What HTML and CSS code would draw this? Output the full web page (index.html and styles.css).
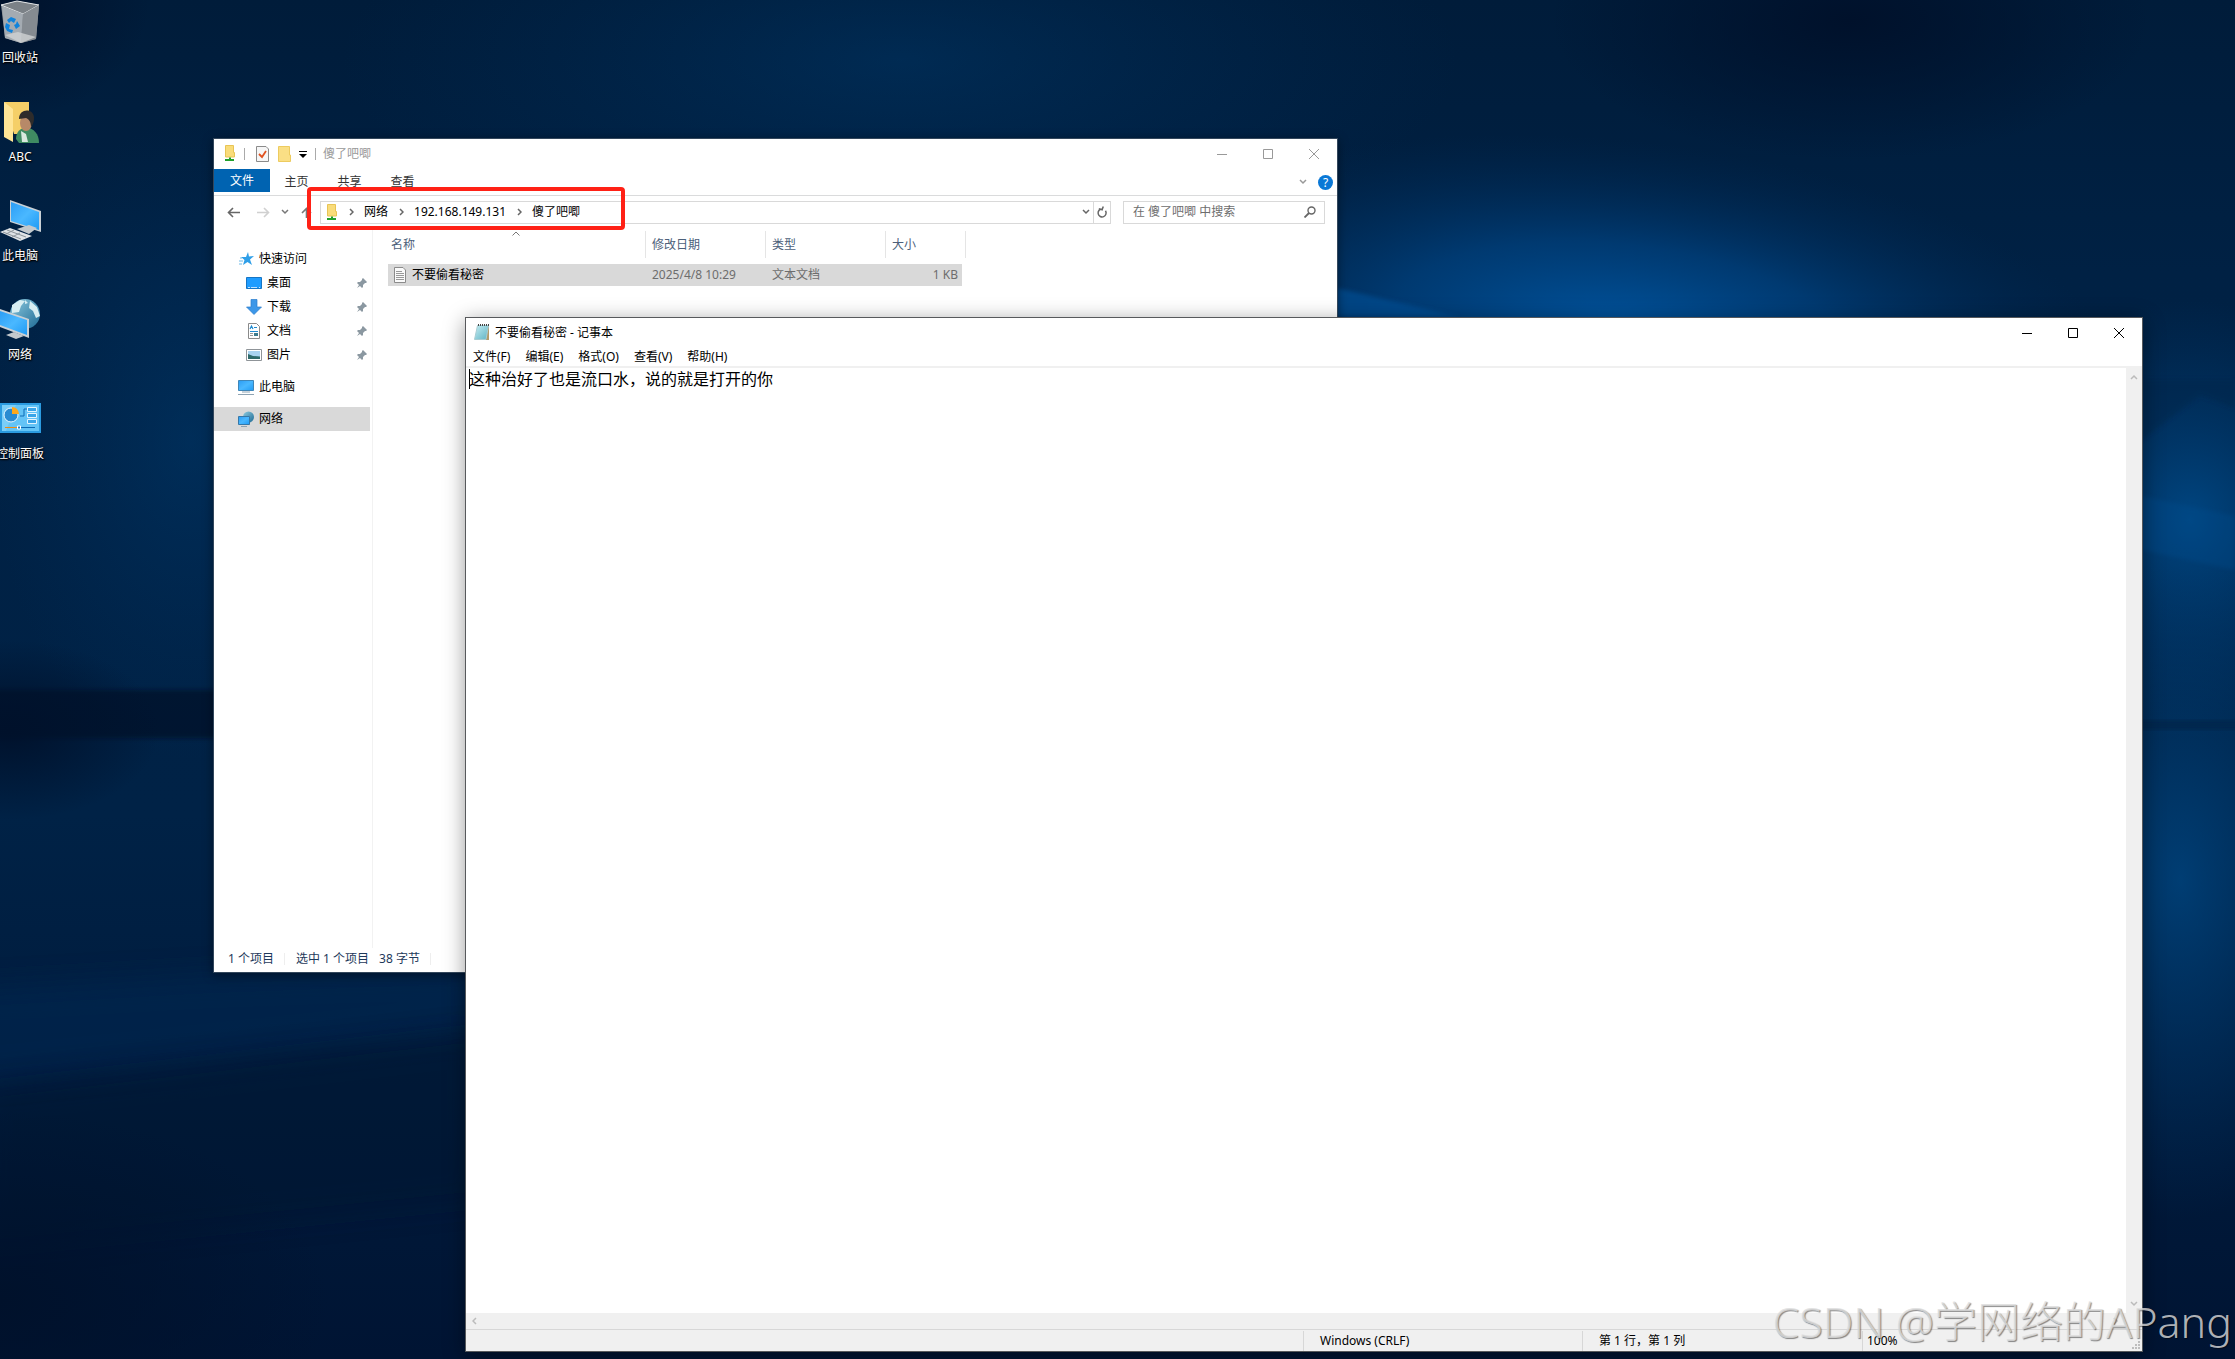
FILE: index.html
```html
<!DOCTYPE html>
<html lang="zh-CN">
<head>
<meta charset="utf-8">
<title>不要偷看秘密 - 记事本</title>
<link rel="stylesheet" href="styles.css">
</head>
<body class="desktop">
<svg class="wallpaper" viewBox="0 0 2235 1359" preserveAspectRatio="none" aria-hidden="true">
  <defs>
    <linearGradient id="base" x1="0" y1="0" x2="0" y2="1"><stop offset="0" stop-color="#001c3a"/><stop offset=".2" stop-color="#002144"/><stop offset=".6" stop-color="#002246"/><stop offset="1" stop-color="#001433"/></linearGradient>
    <radialGradient id="glow"><stop offset="0" stop-color="#0055a0"/><stop offset=".45" stop-color="#004280" stop-opacity=".75"/><stop offset="1" stop-color="#002a55" stop-opacity="0"/></radialGradient>
    <radialGradient id="haze"><stop offset="0" stop-color="#004a88"/><stop offset="1" stop-color="#003a70" stop-opacity="0"/></radialGradient>
    <radialGradient id="dark"><stop offset="0" stop-color="#00112b"/><stop offset="1" stop-color="#00112b" stop-opacity="0"/></radialGradient>
    <filter id="soft" x="-30%" y="-30%" width="160%" height="160%"><feGaussianBlur stdDeviation="14"/></filter>
    <filter id="edge"><feGaussianBlur stdDeviation="2"/></filter>
  </defs>
  <rect width="2235" height="1359" fill="url(#base)"/>
  <ellipse cx="900" cy="60" rx="560" ry="200" fill="url(#haze)" opacity=".3"/>
  <ellipse cx="1620" cy="330" rx="500" ry="190" fill="url(#glow)" transform="rotate(6 1620 330)"/>
  <ellipse cx="1850" cy="20" rx="300" ry="140" fill="url(#dark)"/>
  <ellipse cx="0" cy="0" rx="150" ry="120" fill="url(#dark)"/>
  <ellipse cx="190" cy="440" rx="200" ry="320" fill="url(#haze)" opacity=".3"/>
  <ellipse cx="2190" cy="520" rx="190" ry="220" fill="url(#haze)" opacity=".9"/>
  <ellipse cx="2180" cy="880" rx="180" ry="340" fill="url(#haze)" opacity=".7"/>
  <polygon points="1337,288 1460,317 1337,317" fill="#005199" filter="url(#edge)" opacity=".6"/>
  <polygon points="2142,496 2235,516 2235,570 2142,550" fill="#004d8f" filter="url(#edge)" opacity=".3"/>
  <polygon points="2142,440 2200,395 2235,408 2235,380 2142,380" fill="#00254b" filter="url(#edge)" opacity=".5"/>
  <rect x="2130" y="720" width="120" height="10" fill="#00254d" filter="url(#edge)"/>
  <rect x="-20" y="690" width="240" height="48" fill="#000e24" filter="url(#edge)" opacity=".6"/>
  <ellipse cx="10" cy="730" rx="150" ry="90" fill="url(#dark)"/>
  <polygon points="-60,1085 470,1030 470,965 200,975 -60,990" fill="#002b56" filter="url(#soft)" opacity=".45"/>
  <polygon points="-20,1090 480,1032 480,1200 -20,1250" fill="#00152f" filter="url(#soft)" opacity=".4"/>
  <ellipse cx="0" cy="1300" rx="330" ry="190" fill="url(#dark)"/>
</svg>

<svg class="sprite" aria-hidden="true">
  <defs>
    <linearGradient id="screen" x1="0" y1="0" x2="1" y2="1"><stop offset="0" stop-color="#2b9df5"/><stop offset=".5" stop-color="#4ab8ff"/><stop offset="1" stop-color="#1f9bf5"/></linearGradient>
    <linearGradient id="globe" x1="0" y1="0" x2="1" y2="1"><stop offset="0" stop-color="#8ecbe0"/><stop offset="1" stop-color="#1d6a94"/></linearGradient>
    <linearGradient id="paper" x1="0" y1="0" x2="1" y2="1"><stop offset="0" stop-color="#c5edf2"/><stop offset="1" stop-color="#5fb3c4"/></linearGradient>
    <symbol id="i-share" viewBox="0 0 12 17"><path d="M1.500.5h8v7h1v4.500h-9z" fill="#f9dc7a" stroke="#e8c455"/><path d="M5 12.500h2V14h3v2H1v-2h4z" fill="#22a02c"/></symbol>
    <symbol id="i-pin" viewBox="0 0 10 10"><path d="M6 0l4 4-1 1-1 0-2 2 0 2-1 1-2-2-3 2 2-3-2-2 1-1h2l2-2V1z" fill="#8b98a1"/></symbol>
    <symbol id="i-right" viewBox="0 0 5 8"><path d="M1 1l3 3-3 3" fill="none" stroke="currentColor" stroke-width="1.5"/></symbol>
    <symbol id="i-down" viewBox="0 0 8 6"><path d="M1 1l3 3 3-3" fill="none" stroke="currentColor" stroke-width="1.5"/></symbol>
    <symbol id="i-min" viewBox="0 0 10 10"><path d="M0 5.500h10" stroke="currentColor"/></symbol>
    <symbol id="i-max" viewBox="0 0 10 10"><path d="M.5.5h9v9h-9z" fill="none" stroke="currentColor"/></symbol>
    <symbol id="i-close" viewBox="0 0 10 10"><path d="M0 0l10 10M10 0L0 10" stroke="currentColor"/></symbol>
  </defs>
</svg>

<nav class="shortcuts" aria-label="桌面">
  <a class="shortcut" href="#recycle">
    <svg viewBox="0 0 40 44"><path d="M1 5l16-4 22 4-3 34-15 4-16-5z" fill="#8a9096"/><path d="M1 5l16-4 22 4-16 9z" fill="#7b8187" stroke="#e2e5e7"/><path d="M2 6l21 8-2 29-16-5z" fill="#a4abb2"/><path d="M23 14l16-9-3 34-15 4z" fill="#858b91"/><path d="M5 35l13-3 18 5-15 6z" fill="#d0d2d3" opacity=".8"/><path d="M7 20l4-3 5 2-2 4-3-2-2 2zM17 21l3 5-4 3-2-4 2-1zM6 23l4 2-1 4 4 1-1 3-5-2-2-4z" fill="#1083dc"/></svg>
    <span>回收站</span></a>
  <a class="shortcut" href="#user">
    <svg viewBox="0 0 40 44"><path d="M4 3h25v32H14z" fill="#f5cf68"/><path d="M4 3l9 7v33l-9-5z" fill="#ffe596"/><path d="M16 40c0-8 5-11 10-11 8 0 13 6 13 15H19z" fill="#3f8b62"/><path d="M21 32l5 3 2 8h-6z" fill="#d9e9df"/><ellipse cx="26" cy="24" rx="6" ry="8" fill="#b78968"/><path d="M19 20c0-11 15-11 15-1 0 5-2 8-3 9 0-5-2-8-5-9z" fill="#2e2c2b"/></svg>
    <span>ABC</span></a>
  <a class="shortcut" href="#pc">
    <svg viewBox="0 0 40 44"><path d="M10 2l31 11v21L10 24z" fill="#c9d0d5"/><path d="M11 4l28 10v18L11 23z" fill="url(#screen)"/><path d="M17 31l12-4 8 3-8 6z" fill="#c3c9cd"/><path d="M0 34l10-4 22 8-12 5z" fill="#dfe3e6"/><path d="M3 34l18 7M7 32l19 7M6 36l8-4M12 39l8-4" stroke="#8e969c"/></svg>
    <span>此电脑</span></a>
  <a class="shortcut" href="#net">
    <svg viewBox="0 0 40 44"><circle cx="25" cy="17" r="15" fill="url(#globe)"/><path d="M12 8l8-5 5 1-4 5-2 6-7 1zM30 4l7 6 3 9-4 2-3-7-4-3zM25 3l3 3-3 1z" fill="#d8eef2"/><path d="M0 12l29 10v19L0 30z" fill="#c9d0d5"/><path d="M0 14l27 9v15L0 28z" fill="url(#screen)"/><path d="M6 38l8-3 10 4-8 3z" fill="#c3c9cd"/></svg>
    <span>网络</span></a>
  <a class="shortcut" href="#control">
    <svg viewBox="0 0 40 44"><path d="M0 7h41v30H0z" fill="#2b9be0"/><path d="M2 9h37v26H2z" fill="#64c4f6"/><path d="M2 9h14L6 35H2z" fill="#8fd7fa" opacity=".5"/><circle cx="11" cy="19" r="7" fill="#2a8bd2" stroke="#eaf7ff"/><path d="M12 18v-7a7 7 0 0 1 7 7z" fill="#ffa81c"/><path d="M20 20h4v-7h3" fill="none" stroke="#0c6bb5"/><path d="M27.500 11.500h9v4h-9zM27.500 17.500h9v4h-9zM27.500 23.500h9v4h-9z" fill="#3aa5e8" stroke="#e4f5ff"/><path d="M5 31.500h12" stroke="#f08a10"/><path d="M20 31.500h15" stroke="#0c6bb5"/><path d="M17.500 30h3v3h-3z" fill="#1a80cc" stroke="#fff"/></svg>
    <span>控制面板</span></a>
</nav>

<section class="window explorer" aria-label="傻了吧唧">
  <header class="titlebar">
    <svg class="i-12"><use href="#i-share"/></svg>
    <span class="rule"></span>
    <svg class="props" viewBox="0 0 13 16"><path d="M.5.5H10L12.500 3v12.500H.5z" fill="#f6f6f6" stroke="#8b8b8b"/><path d="M3 8l3 3 4-6" fill="none" stroke="#e0511f" stroke-width="1.800"/></svg>
    <svg class="folder" viewBox="0 0 14 16"><path d="M.5.5h11V9h1v6.500H.5z" fill="#fadf85" stroke="#edcb5f"/></svg>
    <svg class="more" viewBox="0 0 8 8"><path d="M0 1.500h8" stroke="#000"/><path d="M0 4h8L4 8z"/></svg>
    <span class="rule"></span>
    <h1 class="title">傻了吧唧</h1>
    <div class="controls">
      <button aria-label="最小化"><svg><use href="#i-min"/></svg></button>
      <button aria-label="最大化"><svg><use href="#i-max"/></svg></button>
      <button aria-label="关闭"><svg><use href="#i-close"/></svg></button>
    </div>
  </header>
  <div class="ribbon">
    <button class="tab file">文件</button>
    <button class="tab">主页</button>
    <button class="tab">共享</button>
    <button class="tab">查看</button>
    <span class="grow"></span>
    <button class="fold" aria-label="展开功能区"><svg class="i-down"><use href="#i-down"/></svg></button>
    <button class="help" aria-label="帮助">?</button>
  </div>
  <div class="addressbar">
    <div class="history">
      <button aria-label="后退"><svg viewBox="0 0 13 11"><path d="M13 5.500H1.500M6 1L1.500 5.500 6 10" fill="none" stroke="#666" stroke-width="1.600"/></svg></button>
      <button aria-label="前进"><svg viewBox="0 0 13 11"><path d="M0 5.500h11.500M7 1l4.500 4.500L7 10" fill="none" stroke="#d0d0d0" stroke-width="1.600"/></svg></button>
      <button class="recent" aria-label="最近"><svg class="i-down"><use href="#i-down"/></svg></button>
      <button aria-label="向上"><svg viewBox="0 0 13 11"><path d="M6.500 11V1.500M2 6l4.500-4.500L11 6" fill="none" stroke="#777" stroke-width="1.600"/></svg></button>
    </div>
    <div class="path">
      <svg class="i-12"><use href="#i-share"/></svg>
      <svg class="i-right"><use href="#i-right"/></svg><a href="#net">网络</a>
      <svg class="i-right"><use href="#i-right"/></svg><a href="#host">192.168.149.131</a>
      <svg class="i-right"><use href="#i-right"/></svg><a href="#share">傻了吧唧</a>
      <span class="grow"></span>
      <button class="drop" aria-label="以前的位置"><svg class="i-down"><use href="#i-down"/></svg></button>
      <button class="refresh" aria-label="刷新"><svg viewBox="0 0 10 12"><path d="M6.500 3.200A4 4 0 1 1 2.500 3.700M6 .5v3.500h3.500" fill="none" stroke="#666" stroke-width="1.500" transform="matrix(-1 0 0 1 10 0) rotate(-20 5 7)"/></svg></button>
    </div>
    <form class="search">
      <input type="text" aria-label="搜索" placeholder="在 傻了吧唧 中搜索">
      <button type="button" aria-label="搜索"><svg viewBox="0 0 12 12"><circle cx="7.500" cy="4.500" r="3.500" fill="none" stroke="#666" stroke-width="1.400"/><path d="M5 7L.5 11.500" stroke="#666" stroke-width="1.800"/></svg></button>
    </form>
  </div>
  <div class="body">
    <nav class="tree">
      <a href="#quick"><svg viewBox="0 0 16 16"><path d="M10 1l1 4.500 5-.5-4 3.500L14 14l-4.500-3L5 14l1.500-5L3 6h5z" fill="#2f9fe8"/><path d="M1 10h4M1 13h3M2 7h2" stroke="#6db9e8"/></svg>快速访问</a>
      <a class="sub" href="#desk"><svg viewBox="0 0 16 16"><path d="M.5 2.500h15v11H.5z" fill="#1e9cff" stroke="#1675c4"/><path d="M2 12.500h2M5 12.500h6M13 12.500h1" stroke="#bfe2ff"/></svg>桌面<svg class="pin"><use href="#i-pin"/></svg></a>
      <a class="sub" href="#down"><svg viewBox="0 0 16 16"><path d="M5 .5h6V8h4.500L8 15.500.5 8H5z" fill="#3c97e8" stroke="#2a7dcb" stroke-width=".7"/></svg>下载<svg class="pin"><use href="#i-pin"/></svg></a>
      <a class="sub" href="#docs"><svg viewBox="0 0 16 16"><path d="M2.500.5h8l3 3v12h-11z" fill="#fff" stroke="#8a8a8a"/><path d="M4 6l1.500-3L7 6M8 4.500h3M4 8.500h8" fill="none" stroke="#1f8ad0" stroke-width="1.200"/><path d="M4 10.500h3M4 12.500h3" stroke="#999"/><path d="M8 10h4v3H8z" fill="#3d7c8e"/></svg>文档<svg class="pin"><use href="#i-pin"/></svg></a>
      <a class="sub" href="#pics"><svg viewBox="0 0 16 16"><path d="M.5 2.500h15v11H.5z" fill="#fff" stroke="#8f9498"/><path d="M2 4h12v8H2z" fill="#a9d3f0"/><path d="M2 7l5 2 7 .5V12H2z" fill="#2e6a6a"/></svg>图片<svg class="pin"><use href="#i-pin"/></svg></a>
      <a class="gap" href="#pc"><svg viewBox="0 0 16 16"><path d="M.5 1.500h15v10H.5z" fill="url(#screen)" stroke="#3f86b8"/><path d="M4 13h8M0 15.500h16" stroke="#8ea3b3"/></svg>此电脑</a>
      <a class="gap current" href="#net"><svg viewBox="0 0 16 16"><circle cx="10.500" cy="6" r="5.500" fill="url(#globe)"/><path d="M.5 5.500h11v8H.5z" fill="url(#screen)" stroke="#3678a8"/><path d="M3 15.500h6" stroke="#8ea3b3"/></svg>网络</a>
    </nav>
    <main class="files">
      <table>
        <thead><tr><th class="name">名称<svg class="sort" viewBox="0 0 8 5"><path d="M.5 4.500L4 1l3.500 3.500" fill="none" stroke="#777"/></svg></th><th class="date">修改日期</th><th class="kind">类型</th><th class="size">大小</th></tr></thead>
        <tbody><tr><td class="name"><svg viewBox="0 0 12 16"><path d="M.5.5H9L11.500 3v12.500H.5z" fill="#fafafa" stroke="#8b8b8b"/><path d="M2 4.500h6M2 6.500h8M2 8.500h8M2 10.500h8M2 12.500h8" stroke="#999"/></svg>不要偷看秘密</td><td>2025/4/8 10:29</td><td>文本文档</td><td class="size">1 KB</td></tr></tbody>
      </table>
    </main>
  </div>
  <footer class="status"><span>1 个项目</span><span class="rule"></span><span>选中 1 个项目</span><span class="bytes">38 字节</span><span class="rule"></span></footer>
  <div class="highlight"></div>
</section>

<section class="window notepad" aria-label="不要偷看秘密 - 记事本">
  <header class="titlebar">
    <svg class="i-16" viewBox="0 0 16 17"><path d="M4 2h11v14H3z" fill="#b39b6b"/><path d="M3.500 1.500h11L12 15.500H.5z" fill="url(#paper)" stroke="#a8ccd2"/><path d="M4 1h11" stroke="#444" stroke-width="2" stroke-dasharray="1 1"/></svg>
    <h1 class="title">不要偷看秘密 - 记事本</h1>
    <div class="controls">
      <button aria-label="最小化"><svg><use href="#i-min"/></svg></button>
      <button aria-label="最大化"><svg><use href="#i-max"/></svg></button>
      <button aria-label="关闭"><svg><use href="#i-close"/></svg></button>
    </div>
  </header>
  <div class="menubar"><button>文件(F)</button><button>编辑(E)</button><button>格式(O)</button><button>查看(V)</button><button>帮助(H)</button></div>
  <div class="editor">
    <textarea aria-label="文本编辑器" spellcheck="false">这种治好了也是流口水，说的就是打开的你</textarea>
    <span class="caret"></span>
    <div class="vscroll"><svg class="i-down up"><use href="#i-down"/></svg><svg class="i-down"><use href="#i-down"/></svg></div>
    <div class="hscroll"><svg class="i-right left"><use href="#i-right"/></svg><svg class="i-right"><use href="#i-right"/></svg></div>
  </div>
  <footer class="info"><span class="encoding">Windows (CRLF)</span><span class="position">第 1 行，第 1 列</span><span class="zoom">100%</span>
    <svg class="grip" viewBox="0 0 8 8"><path d="M6 0h2v2H6zM6 3h2v2H6zM6 6h2v2H6zM3 3h2v2H3zM3 6h2v2H3zM0 6h2v2H0z" fill="#bdbdbd"/></svg>
  </footer>
</section>
<div class="watermark">CSDN @学网络的APang</div>
</body>
</html>
```
FILE: styles.css
```css
* { box-sizing: border-box; }
html, body { height: 100%; }
body, button, input { font: 12px/16px "Noto Sans", "Noto Sans CJK SC", sans-serif; }
.desktop { position: relative; margin: 0; overflow: hidden; background: #001d3d; color: #000; }
a { color: inherit; text-decoration: none; }
button { padding: 0; border: 0; background: none; color: inherit; }
svg { display: block; flex: none; }
h1 { margin: 0; font: inherit; }
.sprite { position: absolute; width: 0; height: 0; }
.wallpaper { position: absolute; inset: 0; width: 100%; height: 100%; }
.grow { flex: 1; }
.i-12 { width: 12px; height: 17px; }
.i-16 { width: 16px; height: 17px; }
.i-right { width: 5px; height: 8px; }
.i-down { width: 8px; height: 6px; }

.shortcuts { position: relative; display: flex; flex-direction: column; width: 40px; }
.shortcut { display: flex; flex-direction: column; align-items: center; gap: 6px; height: 99px; color: #fff; white-space: nowrap; text-shadow: 1px 1px 2px #000, 0 1px 1px #000; }
.shortcut svg { width: 40px; height: 44px; overflow: visible; }

.window { position: absolute; display: flex; flex-direction: column; background: #fff; }
.titlebar { display: flex; align-items: center; flex: none; }
.controls { display: flex; margin-left: auto; }
.controls button { display: grid; place-items: center; width: 46px; height: 28px; }
.controls svg { width: 10px; height: 10px; }

.explorer { left: 213px; top: 138px; right: 897px; bottom: 386px; border: 1px solid #33475c; box-shadow: 0 2px 10px rgba(0, 0, 0, .4); }
.explorer .titlebar { height: 30px; padding: 0 0 1px 10px; color: #999; }
.rule { width: 1px; height: 12px; background: #aaa; }
.titlebar .rule { margin: 0 11px 0 8px; }
.props { width: 13px; height: 16px; margin-right: 9px; }
.folder { width: 14px; height: 16px; margin-right: 7px; }
.more { width: 8px; height: 8px; }
.explorer .titlebar .rule + .title { margin-left: -4px; }
.ribbon { display: flex; align-items: center; height: 27px; flex: none; border-bottom: 1px solid #dadbdc; color: #333; }
.tab { width: 53px; height: 26px; }
.file { width: 56px; height: 23px; align-self: flex-start; background: #0063b1; color: #fff; }
.fold { color: #999; }
.help { width: 15px; height: 15px; margin: 0 4px 0 11px; border-radius: 50%; background: #0a78d6; color: #fff; line-height: 15px; }
.addressbar { display: flex; align-items: center; height: 32px; flex: none; padding: 0 12px 0 13px; }
.history { display: flex; align-items: center; gap: 11px; width: 93px; overflow: hidden; color: #777; }
.history button svg:not(.i-down) { width: 13px; height: 11px; }
.history button:nth-child(2) { margin-left: 6px; }
.path { display: flex; align-items: center; flex: 1; height: 23px; padding-left: 5px; border: 1px solid #d9d9d9; }
.path .i-right { margin: 0 10px 0 11px; color: #666; }
.drop { margin-right: 3px; color: #666; }
.refresh { display: grid; place-items: center; width: 17px; height: 21px; border-left: 1px solid #d9d9d9; }
.refresh svg { width: 10px; height: 12px; overflow: visible; }
.search { display: flex; align-items: center; width: 202px; height: 23px; margin-left: 12px; padding: 0 8px 0 9px; border: 1px solid #d9d9d9; }
.search input { flex: 1; min-width: 0; padding: 0; border: 0; outline: 0; }
.search input::placeholder { color: #6d6d6d; opacity: 1; }
.search svg { width: 12px; height: 12px; }
.body { display: flex; flex: 1; min-height: 0; }
.tree { display: flex; flex-direction: column; flex: none; width: 159px; padding: 19px 2px 0 0; border-right: 1px solid #f2f2f2; }
.tree a { display: flex; align-items: center; gap: 5px; height: 24px; padding: 0 3px 0 24px; }
.tree a svg { width: 16px; height: 16px; }
.tree .sub { padding-left: 32px; }
.tree .gap { margin-top: 8px; }
.tree .current { background: #d9d9d9; }
.tree a .pin { width: 10px; height: 10px; margin-left: auto; }
.files { flex: 1; min-width: 0; padding: 3px 0 0 15px; }
.files table { border-collapse: separate; border-spacing: 0; table-layout: fixed; width: 578px; }
th { position: relative; height: 33px; padding: 0 0 6px 6px; background: linear-gradient(#e5e5e5, #e5e5e5) right top / 1px 27px no-repeat; color: #4c607a; font-weight: 400; text-align: left; }
th.name { width: 258px; padding-left: 3px; }
th.date, th.kind { width: 120px; }
.sort { position: absolute; left: 48%; top: 0; width: 8px; height: 5px; }
td { height: 22px; padding: 0 0 0 6px; background: #d9d9d9; color: #6d6d6d; vertical-align: middle; }
td.name { display: flex; align-items: center; gap: 6px; color: #000; }
td.name svg { width: 12px; height: 16px; }
td.size { padding-right: 4px; border-right: 4px solid #fff; text-align: right; }
.status { display: flex; align-items: center; height: 24px; flex: none; padding: 0 0 2px 14px; color: #1e395b; }
.status .rule { margin: 0 11px 0 10px; background: #eee; }
.status .bytes { margin-left: 10px; }
.highlight { position: absolute; left: 93px; top: 48px; width: 318px; height: 43px; border: 4px solid #ff2116; border-radius: 4px; }

.notepad { left: 465px; top: 317px; right: 92px; bottom: 7px; border: 1px solid #57595c; box-shadow: 0 4px 20px rgba(0, 0, 0, .4); }
.notepad .titlebar { height: 29px; padding-left: 8px; gap: 5px; }
.menubar { display: flex; align-items: center; gap: 15px; height: 21px; flex: none; padding-left: 7px; border-bottom: 2px solid #f0f0f0; }
.editor { position: relative; display: grid; grid-template: 1fr 16px / 1fr 16px; flex: 1; min-height: 0; }
.editor textarea { padding: 0 3px; border: 0; outline: 0; resize: none; overflow: hidden; background: #fff; color: #000; font: 16px/22px "Noto Sans", "Noto Sans CJK SC", sans-serif; }
.caret { position: absolute; left: 3px; top: 1px; width: 1px; height: 20px; background: #000; }
.vscroll, .hscroll { display: flex; align-items: center; justify-content: space-between; background: #f0f0f0; color: #bbb; }
.vscroll { flex-direction: column; padding: 6px 0; }
.hscroll { grid-column: 1 / 3; padding: 0 24px 0 6px; }
.up, .left { transform: rotate(180deg); }
.info { position: relative; display: flex; align-items: center; justify-content: flex-end; height: 22px; flex: none; border-top: 1px solid #d7d7d7; background: #f0f0f0; }
.info span { border-left: 1px solid #d7d7d7; line-height: 20px; }
.encoding { width: 279px; padding-left: 16px; }
.position { width: 280px; padding-left: 16px; }
.zoom { width: 280px; padding-left: 4px; }
.grip { position: absolute; right: 2px; bottom: 2px; width: 8px; height: 8px; }
.watermark { position: absolute; right: 3px; bottom: 7px; color: rgba(222, 222, 222, .8); font: 300 43px/60px "Noto Sans", "Noto Sans CJK SC", sans-serif; text-shadow: 1px 1px 1px rgba(0, 0, 0, .45); white-space: nowrap; }
```
